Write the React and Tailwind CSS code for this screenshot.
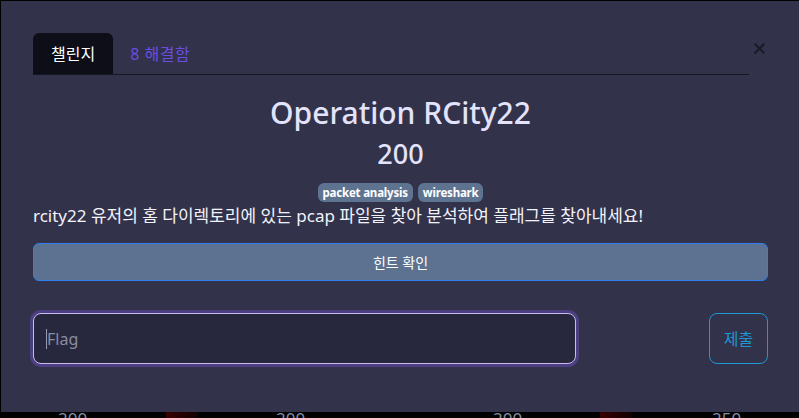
import React from "react";
import { X } from "lucide-react";

const font = { fontFamily: '"Noto Sans", "Noto Sans CJK KR", sans-serif' };

const behind = [
  { label: "200", left: "left-[58px]" },
  { label: "200", left: "left-[276px]" },
  { label: "200", left: "left-[493px]" },
  { label: "250", left: "left-[712px]" },
];

export default function App() {
  return (
    <div className="relative w-[799px] h-[418px] bg-black overflow-hidden" style={font}>
      {/* page behind the modal */}
      {behind.map((b) => (
        <span key={b.left} className={`absolute top-[406px] ${b.left} text-[17px] text-[#7f8fa6]`}>
          {b.label}
        </span>
      ))}
      <div className="absolute top-[412px] left-[166px] w-[32px] h-[6px] bg-gradient-to-r from-[#3a0000] to-[#120000]" />
      <div className="absolute top-[412px] left-[600px] w-[32px] h-[6px] bg-gradient-to-r from-[#3a0000] to-[#120000]" />

      {/* modal */}
      <div className="absolute top-[1px] left-[1px] w-[800px] h-[411px] bg-[#32324a] pl-8 pr-[33px] pt-8">
        <button className="absolute top-[37px] left-[748px] w-5 h-5 flex items-center justify-center text-[#1a1a28]">
          <X className="w-[17px] h-[17px]" strokeWidth={3} />
        </button>

        <div className="flex items-end w-[716px] border-b border-[#16161f] h-[42px]">
          <div className="h-[41px] px-[18px] flex items-center rounded-t-md bg-[#0e0e18] text-white text-[16px]">
            챌린지
          </div>
          <div className="h-[41px] px-[17px] flex items-center text-[#6a4de4] text-[16px] tracking-[0.5px]">
            8 해결함
          </div>
        </div>

        <div className="flex flex-col items-center">
          <h1 className="mt-[17px] text-[30px] leading-[42px] font-medium text-[#e3e3fb]">
            Operation RCity22
          </h1>
          <div className="mt-[3px] text-[27px] leading-[34px] font-medium text-[#e3e3fb]">200</div>
          <div className="mt-[12px] flex gap-[5px]">
            <span className="px-[5px] h-[19px] flex items-center rounded-md bg-[#5e7390] text-white text-[11.5px] font-bold tracking-[-0.2px]">
              packet analysis
            </span>
            <span className="px-[5px] h-[19px] flex items-center rounded-md bg-[#5e7390] text-white text-[11.5px] font-bold tracking-[-0.2px]">
              wireshark
            </span>
          </div>
        </div>
        <p className="mt-[2px] text-[17px] leading-[24px] text-[#f2f2fa]">
          rcity22 유저의 홈 다이렉토리에 있는 pcap 파일을 찾아 분석하여 플래그를 찾아내세요!
        </p>

        <button className="mt-[15px] w-full h-[38px] rounded-md bg-[#5c7290] border border-[#2f7ff0] text-white text-[14px]">
          힌트 확인
        </button>

        <div className="mt-[32px] flex items-start justify-between">
          <div className="w-[543px] h-[51px] rounded-lg border border-[#c9bbee] bg-[#27273e] ring-[3px] ring-[#4c3f82] flex items-center px-3">
            <span className="w-px h-[20px] bg-[#9a9ab0]" />
            <span className="text-[16px] text-[#8c8ca0]">Flag</span>
          </div>
          <button className="w-[59px] h-[51px] rounded-lg border border-[#1e98d4] text-[#1e98d4] text-[16px]">
            제출
          </button>
        </div>
      </div>
    </div>
  );
}
